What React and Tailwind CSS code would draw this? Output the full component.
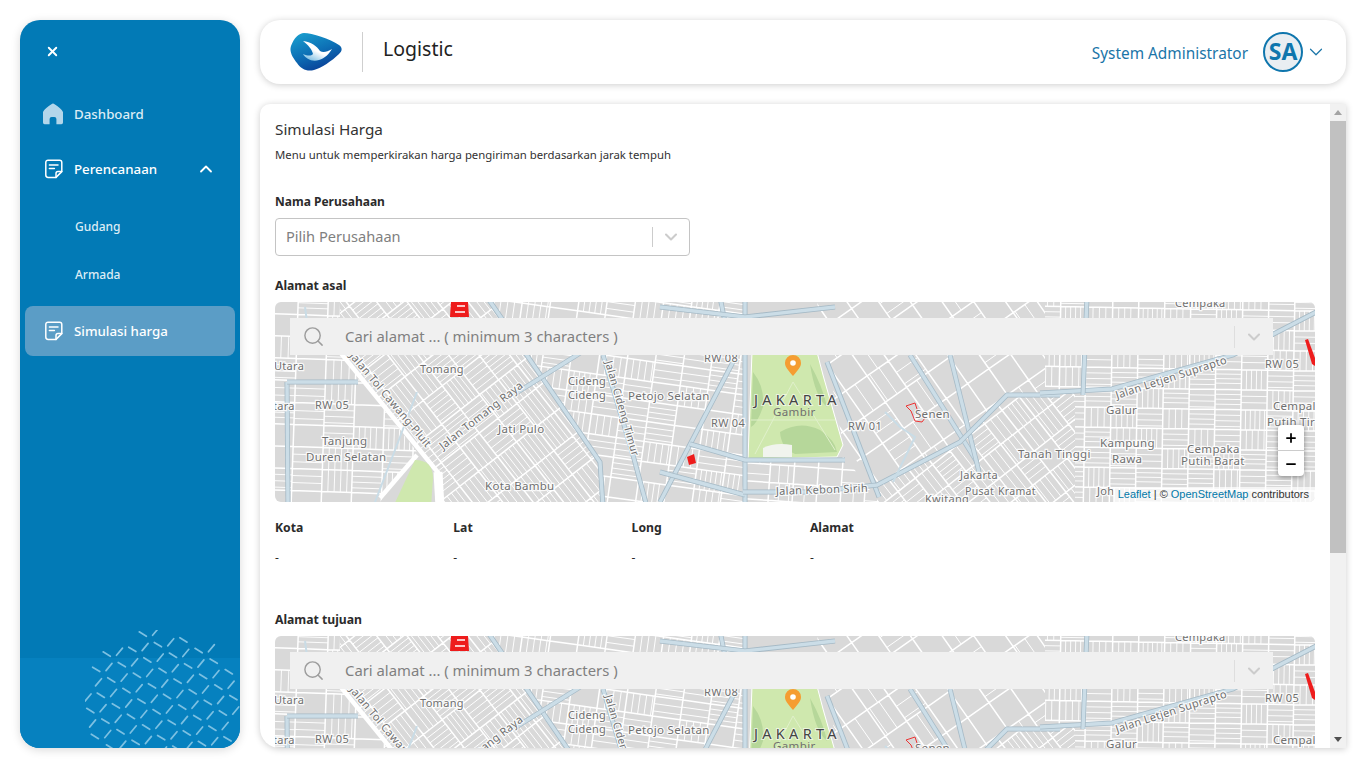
import { X, ChevronUp, ChevronDown, Search, Plus, Minus } from "lucide-react";

const FONT = "font-['Noto_Sans','Open_Sans',sans-serif]";

// small seeded random so both maps and every run draw the same streets
function makeRandom(seed) {
    let s = seed;
    return () => {
        s = (s * 16807) % 2147483647;
        return (s - 1) / 2147483646;
    };
}

// each zone is an area between main roads, with its own street direction and density
const ZONES = [
    { id: "a", points: "0,0 65,0 65,50 142,150 105,200 0,200", angle: 2, block: [30, 22], gap: [5, 8], fill: 0.7 },
    { id: "b", points: "65,0 212,0 325,160 328,200 168,200 165,173 65,50", angle: 52, block: [30, 24], gap: [4.5, 6.5], fill: 1 },
    { id: "c", points: "212,0 470,0 470,200 328,200 325,160", angle: 8, block: [28, 20], gap: [5, 7.5], fill: 0.85 },
    { id: "d", points: "470,155 570,155 604,200 470,200", angle: 4, block: [24, 18], gap: [9, 14], fill: 0.6 },
    { id: "e", points: "542,0 770,0 770,90 732,93 685,140 602,183 568,143", angle: 55, block: [32, 26], gap: [10, 16], fill: 0.55 },
    { id: "f", points: "685,140 732,93 800,90 800,200 602,200 602,183", angle: 52, block: [26, 22], gap: [5, 7.5], fill: 0.95 },
    { id: "g", points: "770,0 1040,0 1040,200 800,200 800,90 770,90", angle: 1, block: [26, 20], gap: [4.5, 6.5], fill: 1 },
];

function zoneStreets(zone, rnd) {
    const [bw, bh] = zone.block;
    let d = "";
    let fine = "";
    for (let y = -620; y < 620; y += bh) {
        for (let x = -620; x < 1200; x += bw) {
            // keep the block only when it can fall on the map once rotated
            const a = (zone.angle * Math.PI) / 180;
            const mx = 520 + x * Math.cos(a) - y * Math.sin(a);
            const my = 100 + x * Math.sin(a) + y * Math.cos(a);
            if (mx < -50 || mx > 1090 || my < -50 || my > 250) continue;
            d += `M${x} ${y}h${bw}M${x} ${y}v${bh}`;
            if (rnd() > zone.fill) continue;
            const gap = zone.gap[0] + rnd() * (zone.gap[1] - zone.gap[0]);
            if (rnd() > 0.45) {
                for (let o = gap; o < bh - 2; o += gap) fine += `M${x} ${(y + o).toFixed(1)}h${bw}`;
            } else {
                for (let o = gap; o < bw - 2; o += gap) fine += `M${(x + o).toFixed(1)} ${y}v${bh}`;
            }
        }
    }
    return { d, fine };
}

const ZONE_PATHS = (() => {
    const rnd = makeRandom(4711);
    return ZONES.map((z) => ({ ...z, ...zoneStreets(z, rnd) }));
})();

const BLUE_ROADS = [
    "M212 -5L325 160L328 205",
    "M238 93L302 53L352 20",
    "M12 80L13 205",
    "M12 80H83",
    "M328 53L358 153L372 205",
    "M470 -5V205",
    "M445 -5L458 60L385 200",
    "M385 170L470 193",
    "M415 142L470 158H570",
    "M552 60L604 195",
    "M635 53L702 160",
    "M675 53L704 170",
    "M785 93H732L685 140L602 183L535 190H468",
    "M765 91L837 87L958 53L1045 8",
    "M812 -5L808 93",
    "M385 5L470 15L560 5",
];

const THIN_BLUE = [
    "M142 90L125 135L100 200",
    "M610 110L625 125L640 135L618 180",
    "M30 5L36 50",
];

const LABELS = [
    ["RW 08", 429, 60, 0, 11],
    ["Tomang", 145, 71, 0, 11],
    ["Utara", -1, 68, 0, 11],
    ["tara", -2, 108, 0, 11],
    ["RW 05", 40, 107, 0, 11],
    ["Tanjung", 47, 143, 0, 11.5],
    ["Duren Selatan", 31, 159, 0, 11.5],
    ["Cideng", 293, 83, 0, 11],
    ["Cideng", 293, 97, 0, 11],
    ["Petojo Selatan", 353, 98, 0, 11.5],
    ["Jati Pulo", 223, 131, 0, 11.5],
    ["Kota Bambu", 210, 188, 0, 11.5],
    ["RW 04", 436, 125, 0, 11],
    ["RW 01", 573, 128, 0, 11],
    ["Senen", 640, 116, 0, 11.5],
    ["Tanah Tinggi", 743, 156, 0, 11.5],
    ["Jakarta", 685, 177, 0, 11],
    ["Pusat", 690, 193, 0, 10.5],
    ["Kramat", 723, 193, 0, 10.5],
    ["Kwitang", 650, 201, 0, 11],
    ["Galur", 831, 112, 0, 11.5],
    ["Kampung", 825, 145, 0, 11.5],
    ["Rawa", 837, 161, 0, 11.5],
    ["Cempaka", 912, 151, 0, 11.5],
    ["Putih Barat", 906, 163, 0, 11.5],
    ["Cempal", 998, 108, 0, 11.5],
    ["Putih Tir", 992, 124, 0, 11.5],
    ["Cempaka", 900, 5, 0, 11],
    ["RW 05", 990, 66, 0, 11],
    ["Joh", 822, 193, 0, 11],
    ["Jalan Kebon Sirih", 501, 193, -2, 11],
    ["Jalan Letjen Suprapto", 842, 97, -18, 11],
    ["Jalan Tomang Raya", 168, 148, -38, 11],
    ["Jalan Tol Cawang-Pluit", 74, 54, 50, 11],
    ["Jalan Cideng Timur", 330, 60, 74, 10.5],
];

function MapArt({ prefix }) {
    return (
        <svg viewBox="0 0 1040 200" width="1040" height="200" className="block">
            <defs>
                {ZONE_PATHS.map((z) => (
                    <clipPath key={z.id} id={`${prefix}-${z.id}`}>
                        <polygon points={z.points} />
                    </clipPath>
                ))}
            </defs>
            <rect width="1040" height="200" fill="#d9d9d9" />
            {ZONE_PATHS.map((z) => (
                <g key={z.id} clipPath={`url(#${prefix}-${z.id})`}>
                    <g transform={`translate(520 100) rotate(${z.angle})`} fill="none" stroke="#ffffff">
                        <path d={z.d} strokeWidth="1.5" />
                        <path d={z.fine} strokeWidth="0.9" />
                    </g>
                </g>
            ))}
            {/* park */}
            <path d="M477 50H542L548 73L568 143L562 155L473 157Z" fill="#cfe8ae" stroke="#ffffff" strokeWidth="1" />
            <path d="M478 70Q490 85 488 105Q482 122 476 125ZM505 130Q525 118 545 128Q560 138 562 150L520 152Q506 146 505 130ZM535 62Q548 85 552 105Q540 95 535 62Z" fill="#b6d79a" />
            <path d="M518 80L480 152M518 80L560 148M476 118H560" stroke="#e0f0cb" strokeWidth="1" fill="none" />
            <path d="M488 155V146Q500 140 517 143V155Z" fill="#f1f4ee" />
            <path d="M65 50L165 173" stroke="#ffffff" strokeWidth="4.5" fill="none" />
            <path d="M142 153L105 196" stroke="#ffffff" strokeWidth="4.5" fill="none" />
            <path d="M140 158Q158 158 158 176L156 205H118Z" fill="#cfe8ae" />
            <path d="M163 170L165 205" stroke="#ffffff" strokeWidth="9" fill="none" />
            {BLUE_ROADS.map((d) => (
                <g key={d} fill="none">
                    <path d={d} stroke="#a6bac6" strokeWidth="5" />
                    <path d={d} stroke="#cbdde7" strokeWidth="3.4" />
                </g>
            ))}
            {THIN_BLUE.map((d) => (
                <path key={d} d={d} fill="none" stroke="#c9dce6" strokeWidth="2" />
            ))}
            {/* red buildings */}
            <path d="M176 0H193L194 15H175Z" fill="#ee1c1c" />
            <path d="M182 4H190M180 10H190" stroke="#ffffff" strokeWidth="1.5" />
            <path d="M412 155L419 152L421 161L414 163Z" fill="#ee1c1c" />
            <path d="M631 104L640 101L644 113L650 116L647 120L640 119L636 109Z" fill="none" stroke="#e33" strokeWidth="1" />
            <path d="M1030 38L1033 37L1040 56V64L1037 62Z" fill="#ee1c1c" />
            {LABELS.map(([t, x, y, r, size]) => (
                <text
                    key={`${t}${x}`}
                    x={x}
                    y={y}
                    fontSize={size}
                    fill="#707070"
                    stroke="#ffffff"
                    strokeOpacity="0.85"
                    strokeWidth="2.4"
                    paintOrder="stroke"
                    letterSpacing="0.3"
                    fontFamily="Noto Sans, sans-serif"
                    transform={r ? `rotate(${r} ${x} ${y})` : undefined}
                >
                    {t}
                </text>
            ))}
            <text x="479" y="103" fontSize="14.5" fill="#444444" letterSpacing="4.3" fontFamily="Noto Sans, sans-serif" stroke="#ffffff" strokeOpacity="0.6" strokeWidth="2" paintOrder="stroke">
                JAKARTA
            </text>
            <text x="498" y="114" fontSize="11.5" fill="#6f6f6f" letterSpacing="0.4" fontFamily="Noto Sans, sans-serif">
                Gambir
            </text>
            {/* pin */}
            <path d="M518 74C513 68 510 65 510 61A8 8 0 0 1 526 61C526 65 523 68 518 74Z" fill="#f59d32" />
            <circle cx="518" cy="61" r="2.8" fill="#ffffff" />
        </svg>
    );
}

function MapBox({ prefix }) {
    return (
        <div className="relative h-[200px] w-[1040px] shrink-0 overflow-hidden rounded-md">
            <MapArt prefix={prefix} />
            <div className="absolute left-[15px] top-4 flex h-[37px] w-[983px] items-center bg-[#f0f0f0]">
                <Search size={23} strokeWidth={1.5} className="ml-[12px] text-[#9d9d9d]" />
                <span className="ml-[20px] flex-1 text-[14.85px] text-[#808080]">Cari alamat ... ( minimum 3 characters )</span>
                <span className="h-[22px] w-px bg-[#dedede]" />
                <ChevronDown size={20} strokeWidth={2.5} className="mx-[9px] text-[#cccccc]" />
            </div>
            <div className="absolute left-[1003px] top-[123px] flex w-[26px] flex-col overflow-hidden rounded-sm bg-white text-black shadow-[0_1px_5px_rgba(0,0,0,0.4)]">
                <span className="flex h-[26px] items-center justify-center border-b border-[#cccccc]">
                    <Plus size={14} strokeWidth={3} />
                </span>
                <span className="flex h-[25px] items-center justify-center">
                    <Minus size={14} strokeWidth={3} />
                </span>
            </div>
            <div className="absolute bottom-0 right-0 h-[15px] bg-white/70 pl-[5px] pr-[6px] font-['Liberation_Sans',sans-serif] text-[11px] leading-[15px] text-[#333333]">
                <span className="text-[#0078a8]">Leaflet</span> | © <span className="text-[#0078a8]">OpenStreetMap</span> contributors
            </div>
        </div>
    );
}

function NoteIcon() {
    return (
        <svg width="20" height="20" viewBox="0 0 20 20" fill="none" stroke="#ffffff" strokeWidth="1.5" strokeLinejoin="round" strokeLinecap="round">
            <path d="M12 18.4H4.2A2.4 2.4 0 0 1 1.8 16V3.4A2.2 2.2 0 0 1 4 1.2H15.6A2.2 2.2 0 0 1 17.8 3.4V12.6Z" />
            <path d="M12 18.4V14.6A2 2 0 0 1 14 12.6H17.8" />
            <path d="M5.4 6H14M5.4 9.6H10.4" />
        </svg>
    );
}

function HomeIcon() {
    return (
        <svg width="22" height="22" viewBox="0 0 22 22" fill="#b3d6ea">
            <path d="M9.4 1.2A2.6 2.6 0 0 1 12.6 1.2C16 3.6 20 6.4 21 9V19.6A1.6 1.6 0 0 1 19.4 21.2H14.4V16A2 2 0 0 0 12.4 14H9.6A2 2 0 0 0 7.6 16V21.2H2.6A1.6 1.6 0 0 1 1 19.6V9C2 6.4 6 3.6 9.4 1.2Z" />
        </svg>
    );
}

function SidePattern() {
    const dashes = [];
    for (let j = -8; j < 10; j++) {
        for (let i = -14; i < 20; i++) {
            const x = 24 + i * 12.8 - j * 10.5;
            const y = 37 - i * 2.35 + j * 15.3;
            if (Math.hypot(x - 77, y - 77) > 77) continue;
            dashes.push(
                i % 2 === 0 ? (
                    <path key={`${i}-${j}`} d={`M${x - 3} ${y + 3.6}L${x + 3} ${y - 3.6}`} />
                ) : (
                    <path key={`${i}-${j}`} d={`M${x - 3.6} ${y - 2.2}L${x + 3.6} ${y + 2.2}`} />
                )
            );
        }
    }
    return (
        <svg width="155" height="118" viewBox="0 0 155 118" fill="none" stroke="#7cc0e2" strokeWidth="1.7" strokeLinecap="round" className="absolute bottom-0 right-0">
            {dashes}
        </svg>
    );
}

function Logo() {
    return (
        <svg width="52" height="40" viewBox="0 0 52 40" className="shrink-0">
            <defs>
                <linearGradient id="logoFill" x1="0.1" y1="0" x2="0.6" y2="1">
                    <stop offset="0" stopColor="#1aa0cf" />
                    <stop offset="0.55" stopColor="#0d6fb5" />
                    <stop offset="1" stopColor="#0a3f97" />
                </linearGradient>
                <linearGradient id="doveFill" x1="0.7" y1="0.2" x2="0.2" y2="0.9">
                    <stop offset="0.45" stopColor="#ffffff" />
                    <stop offset="1" stopColor="#8cc6e6" />
                </linearGradient>
            </defs>
            <path d="M1 14C4 6 9 1 14 1C22 1 40 7 49 13C53 16 52 19 49 22C42 29 31 36 24 38C17 40 11 37 7 31C3 26 -1 20 1 14Z" fill="url(#logoFill)" />
            <path d="M13 9C21 10 27 14 30 19C33 21 37 20 42 17C39 22 35 26 29 28C22 30 16 27 13 22C18 24 21 24 23 22C22 17 18 13 13 9Z" fill="url(#doveFill)" />
        </svg>
    );
}

function Scrollbar() {
    return (
        <div className="flex w-4 shrink-0 flex-col items-center bg-[#f1f1f1]">
            <div className="flex h-[17px] w-full items-center justify-center">
                <span className="h-0 w-0 border-x-4 border-b-[5px] border-x-transparent border-b-[#a3a3a3]" />
            </div>
            <div className="h-[432px] w-full bg-[#c1c1c1]" />
            <div className="flex-1" />
            <div className="flex h-[17px] w-full items-center justify-center">
                <span className="h-0 w-0 border-x-4 border-t-[5px] border-x-transparent border-t-[#505050]" />
            </div>
        </div>
    );
}

function DataColumn({ title }) {
    return (
        <div className="w-[178.3px]">
            <p className="text-[12.2px] font-bold leading-4 text-[#2b2b2b]">{title}</p>
            <p className="mt-[14px] text-xs leading-4 text-[#2b2b2b]">-</p>
        </div>
    );
}

export default function App() {
    return (
        <div className={`flex h-screen gap-5 overflow-hidden bg-white p-5 ${FONT}`}>
            <aside className="relative w-[220px] shrink-0 overflow-hidden rounded-[20px] bg-[#027ab6] shadow-[0_2px_10px_rgba(0,0,0,0.15)]">
                <div className="absolute inset-x-0 bottom-0 h-[90px] bg-[#0681bf]" />
                <SidePattern />
                <div className="relative flex flex-col px-[5px]">
                    <div className="flex h-[69px] items-start pl-[20px] pt-[24px] text-white">
                        <X size={15} strokeWidth={3} />
                    </div>
                    <a className="flex h-[50px] items-center pl-[17px] text-[13.3px] font-medium text-[#dcecf5]">
                        <HomeIcon />
                        <span className="ml-[10px] mt-[2px]">Dashboard</span>
                    </a>
                    <a className="mt-[5px] flex h-[50px] items-center pl-[19px] pr-[19px] text-[13.3px] font-medium text-white">
                        <NoteIcon />
                        <span className="ml-[10px] mt-[2px] flex-1">Perencanaan</span>
                        <ChevronUp size={20} strokeWidth={2.2} />
                    </a>
                    <a className="mt-2 flex h-12 items-center pl-[50px] pt-[2px] text-xs font-medium text-[#dcecf5]">Gudang</a>
                    <a className="flex h-12 items-center pl-[50px] pt-[2px] text-xs font-medium text-[#dcecf5]">Armada</a>
                    <a className="mt-2 flex h-[50px] items-center rounded-lg bg-[#5b9dc6] pl-[19px] text-[13.3px] font-medium text-white">
                        <NoteIcon />
                        <span className="ml-[10px] mt-[2px]">Simulasi harga</span>
                    </a>
                </div>
            </aside>
            <main className="flex min-w-0 flex-1 flex-col gap-5">
                <header className="flex h-16 shrink-0 items-center rounded-[20px] bg-white pl-[30px] pr-[19px] shadow-[0_1px_7px_rgba(0,0,0,0.2)]">
                    <Logo />
                    <span className="ml-5 h-10 w-px bg-[#cfcfcf]" />
                    <span className="mb-[6px] ml-5 text-[19.5px] text-[#222222]">Logistic</span>
                    <span className="ml-auto mt-1 text-[15.4px] text-[#1a75a8]">System Administrator</span>
                    <span className="ml-[15px] flex h-10 w-10 items-center justify-center rounded-full border-2 border-[#0f76ad] bg-[#e9eef2] pb-[2px] text-[23px] font-bold text-[#0f76ad]">SA</span>
                    <ChevronDown size={22} strokeWidth={1.3} className="ml-[2px] text-[#1a75a8]" />
                </header>
                <section className="flex min-h-0 flex-1 overflow-hidden rounded-tl-[10px] rounded-bl-[20px] bg-white shadow-[0_1px_7px_rgba(0,0,0,0.2)]">
                    <div className="min-w-0 flex-1 overflow-hidden pl-[15px] pt-[14px]">
                        <h1 className="text-[15.3px] leading-[22px] text-[#333333]">Simulasi Harga</h1>
                        <p className="mt-[7px] text-[11.35px] leading-4 text-[#333333]">Menu untuk memperkirakan harga pengiriman berdasarkan jarak tempuh</p>
                        <label className="mt-[31px] block text-xs font-bold leading-4 text-[#2b2b2b]">Nama Perusahaan</label>
                        <div className="mt-2 flex h-[38px] w-[415px] items-center rounded border border-[#c4c4c4] pl-[10px]">
                            <span className="flex-1 text-[14.6px] text-[#808080]">Pilih Perusahaan</span>
                            <span className="h-5 w-px bg-[#cccccc]" />
                            <ChevronDown size={20} strokeWidth={2.5} className="mx-[8px] text-[#cccccc]" />
                        </div>
                        <label className="mt-[22px] block text-[12.2px] font-bold leading-4 text-[#2b2b2b]">Alamat asal</label>
                        <div className="mt-2">
                            <MapBox prefix="asal" />
                        </div>
                        <div className="mt-[18px] flex">
                            <DataColumn title="Kota" />
                            <DataColumn title="Lat" />
                            <DataColumn title="Long" />
                            <DataColumn title="Alamat" />
                        </div>
                        <label className="mt-[46px] block text-[12.2px] font-bold leading-4 text-[#2b2b2b]">Alamat tujuan</label>
                        <div className="mt-2">
                            <MapBox prefix="tujuan" />
                        </div>
                    </div>
                    <Scrollbar />
                </section>
            </main>
        </div>
    );
}
